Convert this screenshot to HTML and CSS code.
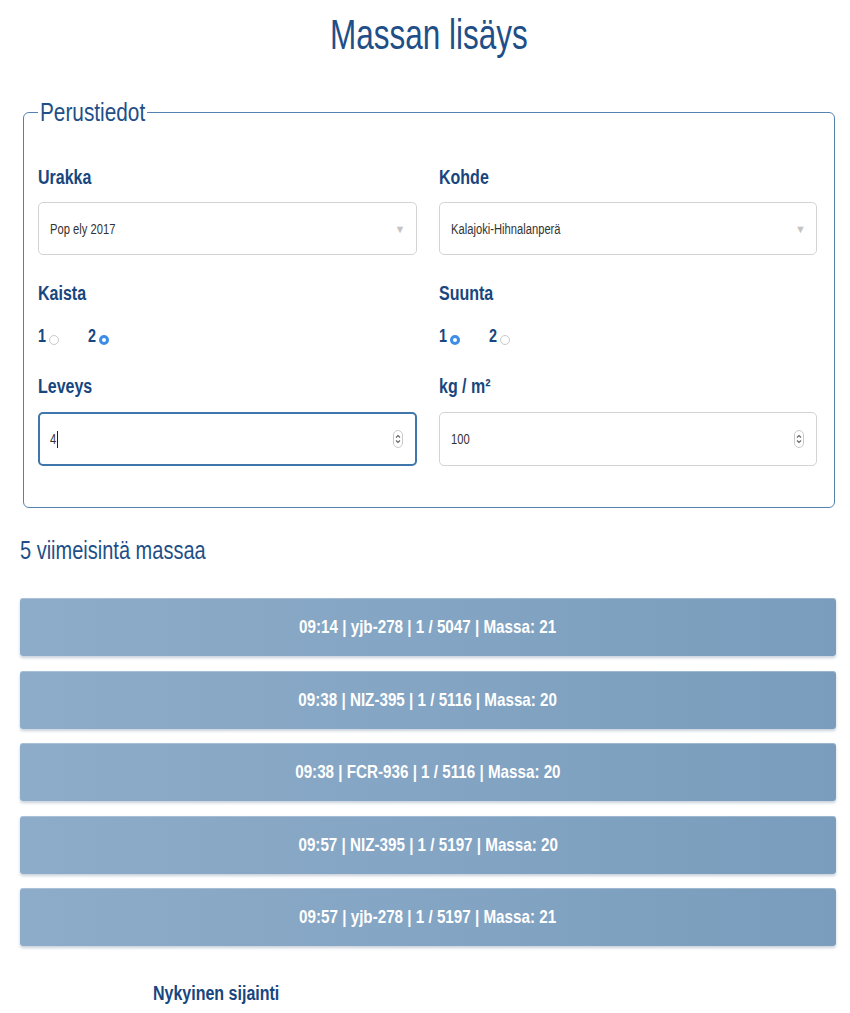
FILE: index.html
```html
<!DOCTYPE html>
<html>
<head>
<meta charset="utf-8">
<title>Massan lisäys</title>
<link rel="stylesheet" href="styles.css">
</head>
<body>
	<h1 class="title"><span class="narrow mid">Massan lisäys</span></h1>

	<fieldset class="basics">
		<legend><span class="narrow">Perustiedot</span></legend>
		<div class="grid">
			<div class="field">
				<label><span class="narrow">Urakka</span></label>
				<div class="control">
					<span class="narrow">Pop ely 2017</span>
					<span class="arrow">▼</span>
				</div>
			</div>
			<div class="field">
				<label><span class="narrow">Kohde</span></label>
				<div class="control">
					<span class="narrow">Kalajoki-Hihnalanperä</span>
					<span class="arrow">▼</span>
				</div>
			</div>

			<div class="field">
				<label><span class="narrow">Kaista</span></label>
				<div class="radios">
					<span class="opt"><span class="narrow">1</span><i class="dot"></i></span>
					<span class="opt"><span class="narrow">2</span><i class="dot on"></i></span>
				</div>
			</div>
			<div class="field">
				<label><span class="narrow">Suunta</span></label>
				<div class="radios">
					<span class="opt"><span class="narrow">1</span><i class="dot on"></i></span>
					<span class="opt"><span class="narrow">2</span><i class="dot"></i></span>
				</div>
			</div>

			<div class="field">
				<label><span class="narrow">Leveys</span></label>
				<div class="control focus">
					<span class="narrow">4</span><span class="caret"></span>
					<svg class="spin" width="10" height="18" viewBox="0 0 10 18"><rect x="0.5" y="0.5" width="9" height="17" rx="4.5" fill="#fff" stroke="#c9c9c9"/><path d="M3 7.5 L5 5.5 L7 7.5 M3 10.5 L5 12.5 L7 10.5" fill="none" stroke="#666" stroke-width="1.2"/></svg>
				</div>
			</div>
			<div class="field">
				<label><span class="narrow">kg / m²</span></label>
				<div class="control">
					<span class="narrow">100</span>
					<svg class="spin" width="10" height="18" viewBox="0 0 10 18"><rect x="0.5" y="0.5" width="9" height="17" rx="4.5" fill="#fff" stroke="#c9c9c9"/><path d="M3 7.5 L5 5.5 L7 7.5 M3 10.5 L5 12.5 L7 10.5" fill="none" stroke="#666" stroke-width="1.2"/></svg>
				</div>
			</div>
		</div>
	</fieldset>

	<h2 class="latest"><span class="narrow">5 viimeisintä massaa</span></h2>
	<ul class="list">
		<li><span class="narrow mid">09:14 | yjb-278 | 1 / 5047 | Massa: 21</span></li>
		<li><span class="narrow mid">09:38 | NIZ-395 | 1 / 5116 | Massa: 20</span></li>
		<li><span class="narrow mid">09:38 | FCR-936 | 1 / 5116 | Massa: 20</span></li>
		<li><span class="narrow mid">09:57 | NIZ-395 | 1 / 5197 | Massa: 20</span></li>
		<li><span class="narrow mid">09:57 | yjb-278 | 1 / 5197 | Massa: 21</span></li>
	</ul>

	<p class="location"><span class="narrow">Nykyinen sijainti</span></p>
</body>
</html>
```

FILE: styles.css
```css
*{margin: 0;padding: 0;box-sizing: border-box;}
html,body{
	overflow: hidden;
	background: #fff;
}
body{
	width: 850px;
	font-family: "Liberation Sans", Arial, sans-serif;
	color: #1b4a80;
}
/* text in the shot is squeezed sideways */
.narrow{
	display: inline-block;
	white-space: nowrap;
	transform: scaleX(.8);
	transform-origin: 0 50%;
}
.narrow.mid{
	transform-origin: 50% 50%;
}
.title{
	padding: 12px 0 0 8px;
	font-size: 42px;
	line-height: 46px;
	font-weight: normal;
	text-align: center;
	color: #1f4f88;
}
.title .narrow{
	transform: scaleX(.75);
}
.basics{
	margin: 39px 0 0 23px;
	width: 812px;
	padding: 0 17px 41px 14px;
	border: 1px solid #5482b0;
	border-radius: 6px;
}
.basics legend{
	width: 109px;
	padding: 0 2px;
	font-size: 26px;
	line-height: 30px;
	color: #1f4f88;
}
.grid{
	display: grid;
	grid-template-columns: 1fr 1fr;
	column-gap: 22px;
	row-gap: 26px;
	padding-top: 38px;
}
.field label{
	display: block;
	font-size: 20px;
	line-height: 24px;
	font-weight: bold;
	color: #18467e;
	margin-bottom: 13px;
}
.field:nth-child(3) label,
.field:nth-child(4) label{
	margin-bottom: 0;
}
.field:nth-child(n+5) label{
	margin-bottom: 14px;
}
.control{
	position: relative;
	display: flex;
	align-items: center;
	height: 53px;
	padding: 0 11px;
	border: 1px solid #d3d3d3;
	border-radius: 5px;
	font-size: 14px;
	color: #333;
}
.field:nth-child(n+5) .control{
	height: 54px;
}
.control.focus{
	border: 2px solid #3f77ad;
	padding-left: 10px;
}
.caret{
	display: inline-block;
	width: 1px;
	height: 17px;
	margin-left: -1px;
	background: #222;
}
.arrow{
	position: absolute;
	right: 10px;
	top: 50%;
	margin-top: -8px;
	font-size: 11px;
	line-height: 16px;
	color: #c4c4c4;
}
.spin{
	position: absolute;
	right: 12px;
	top: 50%;
	margin-top: -9px;
}
.radios{
	display: flex;
	gap: 29px;
	margin-top: 19px;
	height: 24px;
	line-height: 24px;
	font-size: 18px;
	font-weight: bold;
	color: #18467e;
}
.opt{
	display: flex;
	align-items: flex-end;
}
.dot{
	display: block;
	width: 10px;
	height: 10px;
	margin: 0 0 3px 1px;
	border: 1px solid #c9c9c9;
	border-radius: 50%;
	background: #fff;
}
.dot.on{
	border: 3px solid #3d8de6;
}
.latest{
	margin: 27px 0 0 20px;
	font-size: 25px;
	line-height: 30px;
	font-weight: normal;
	color: #1f4f88;
}
.list{
	list-style: none;
	margin: 33px 0 0 20px;
	width: 816px;
	display: flex;
	flex-direction: column;
	gap: 14.5px;
}
.list li{
	height: 58px;
	line-height: 58px;
	text-align: center;
	font-size: 19px;
	font-weight: bold;
	color: #fff;
	border-radius: 3px;
	background: linear-gradient(to right, #8dacc9, #7a9dbd);
	box-shadow: inset 0 1px 0 rgba(255,255,255,.25), 0 2px 3px rgba(40,70,110,.25);
}
.location{
	margin: 35px 0 0 153px;
	font-size: 20px;
	line-height: 24px;
	font-weight: bold;
	color: #18467e;
}
```
